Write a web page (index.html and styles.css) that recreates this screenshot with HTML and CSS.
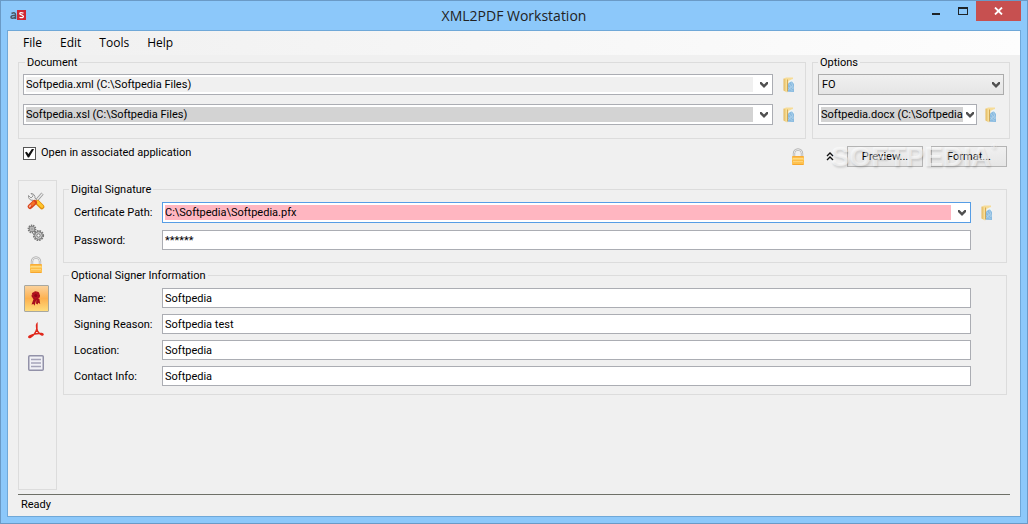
FILE: index.html
```html
<!DOCTYPE html>
<html lang="en">
<head>
<meta charset="utf-8">
<title>XML2PDF Workstation</title>
<link rel="stylesheet" href="styles.css">
</head>
<body>
<svg class="defs" aria-hidden="true">
  <defs>
    <linearGradient id="gold" x1="0" y1="0" x2="0" y2="1">
      <stop offset="0" stop-color="#f7a52c"/><stop offset=".35" stop-color="#ffd56e"/><stop offset=".55" stop-color="#fcb53c"/><stop offset=".8" stop-color="#ffc95a"/><stop offset="1" stop-color="#f59a1c"/>
    </linearGradient>
    <linearGradient id="manila" x1="0" y1="0" x2="1" y2="0">
      <stop offset="0" stop-color="#e3b75a"/><stop offset="1" stop-color="#fbe6a6"/>
    </linearGradient>
  </defs>
  <symbol id="folder" viewBox="0 0 16 16">
    <path d="M3 1.500L5 .5h7V12L7 14H3z" fill="#f6dc98"/>
    <path d="M7.500 4l4-2 1.500 2v9H7.500z" fill="#eef4f6"/>
    <path d="M6.500 8Q8 4.500 11 4.500L13 7v8l-6.500-.2z" fill="#8abbe0"/>
    <path d="M8 7l4 5M7.500 10l4 4M10.500 5.500l2 6M7.500 13l3-4" stroke="#b9d9ee" stroke-width=".7"/>
    <path d="M2.500 1.500L6 2.500v13l-3.500-2z" fill="url(#manila)"/>
    <path d="M6 2.500h.8v11l-.8 2z" fill="#cf9d45"/>
  </symbol>
  <symbol id="lock" viewBox="0 0 16 18">
    <path d="M4 9V5.500a4 4 0 0 1 8 0V9" fill="none" stroke="#b2b2b2" stroke-width="2.400"/>
    <path d="M4 9V5.500a4 4 0 0 1 8 0V9" fill="none" stroke="#e8e8e8" stroke-width="1"/>
    <rect x="2" y="8" width="12" height="9" rx="1" fill="url(#gold)"/>
    <path d="M3 10.500h10M3 13.500h10" stroke="#ffe092" stroke-width=".7"/>
  </symbol>
  <symbol id="chevron" viewBox="0 0 8 7">
    <path d="M0 1v2l4 4 4-4V1H6.500L4 3.500 1.500 1z" fill="#505050"/>
  </symbol>
</svg>
<div class="window">
  <header class="titlebar">
    <svg class="logo" viewBox="0 0 17 12" role="img" aria-label="as">
      <rect x="7" y="0" width="9" height="10" fill="#cf2733"/>
      <path d="M1.500 3.500Q5.500 1.500 5.500 5V9M5.500 5.300Q1 5.300 1 7.200T5.500 7.500" fill="none" stroke="#4a5663" stroke-width="1.500"/>
      <path d="M13.500 3.200Q9.800 2 9.800 3.700C9.800 5.200 13.400 4.600 13.400 6.500Q13.400 8.200 9.500 7.300" fill="none" stroke="#fff" stroke-width="1.300"/>
    </svg>
    <h1 class="title">XML2PDF Workstation</h1>
    <div class="caption-buttons">
      <button class="caption" aria-label="Minimize"><svg width="9" height="10" viewBox="0 0 9 10"><path d="M1 7h8v2H1z" fill="#1e2428"/></svg></button>
      <button class="caption" aria-label="Maximize"><svg width="10" height="10" viewBox="0 0 10 10"><path d="M0 1h10v8H0zM1 3v5h8V3z" fill="#1e2428" fill-rule="evenodd"/></svg></button>
      <button class="caption close" aria-label="Close"><svg width="9" height="8" viewBox="0 0 9 8"><path d="M1 .5l7 7M8 .5l-7 7" stroke="#fff" stroke-width="1.800"/></svg></button>
    </div>
  </header>
  <main class="client">
    <nav class="menu" aria-label="Main">
      <button>File</button><button>Edit</button><button>Tools</button><button>Help</button>
    </nav>
    <div class="top">
      <fieldset class="group files">
        <legend>Document</legend>
        <div class="file-row">
          <div class="combo light"><input type="text" aria-label="XML file" value="Softpedia.xml (C:\Softpedia Files)"><button aria-label="Show XML files"><svg class="chev"><use href="#chevron"/></svg></button></div>
          <button class="browse" aria-label="Browse XML"><svg class="icon"><use href="#folder"/></svg></button>
        </div>
        <div class="file-row">
          <div class="combo grey"><input type="text" aria-label="XSL file" value="Softpedia.xsl (C:\Softpedia Files)"><button aria-label="Show XSL files"><svg class="chev"><use href="#chevron"/></svg></button></div>
          <button class="browse" aria-label="Browse XSL"><svg class="icon"><use href="#folder"/></svg></button>
        </div>
      </fieldset>
      <fieldset class="group options">
        <legend>Options</legend>
        <div class="select-wrap"><select aria-label="Output mode"><option>FO</option></select><svg class="chev"><use href="#chevron"/></svg></div>
        <div class="file-row">
          <div class="combo grey"><input type="text" aria-label="Output file" value="Softpedia.docx (C:\Softpedia"><button aria-label="Show output files"><svg class="chev"><use href="#chevron"/></svg></button></div>
          <button class="browse" aria-label="Browse output"><svg class="icon"><use href="#folder"/></svg></button>
        </div>
      </fieldset>
    </div>
    <div class="actions">
      <label class="check"><input type="checkbox" checked>Open in associated application</label>
      <div class="run">
        <svg class="lock"><use href="#lock"/></svg>
        <button class="collapse" aria-label="Collapse"><svg width="8" height="9" viewBox="0 0 8 9"><path d="M1 4l3-3 3 3M1 8l3-3 3 3" fill="none" stroke="#111" stroke-width="1.400"/></svg></button>
        <button class="push">Preview...</button>
        <button class="push">Format...</button>
        <span class="watermark" aria-hidden="true">SOFTPEDIA<sup>®</sup></span>
      </div>
    </div>
    <div class="work">
      <div class="side" role="toolbar" aria-label="Sections">
        <button aria-label="General"><svg width="18" height="18" viewBox="0 0 18 18">
          <path d="M15.500 1.500L9 9" stroke="#999" stroke-width="3"/><path d="M15.500 1.500L9 9" stroke="#eee" stroke-width="1.200"/>
          <path d="M1.500 3.500L4 6 6.200 3.800 4 1.400A4 4 0 0 1 8 6L10.500 9 8.500 11 6 8.300A4 4 0 0 1 1.500 3.500z" fill="#eee" stroke="#8d8d8d" stroke-width=".9"/>
          <path d="M10.500 10.500l4.300 4.300" stroke="#e08e10" stroke-width="5" stroke-linecap="round"/><path d="M10.500 10l4.500 4.500" stroke="#ffc62b" stroke-width="2.800" stroke-linecap="round"/>
          <path d="M7.500 10.500L3.200 14.500" stroke="#d8441c" stroke-width="5" stroke-linecap="round"/><path d="M7.500 10l-3 3" stroke="#f67428" stroke-width="2.500"/><path d="M3.500 13.500l-.8 1" stroke="#f9b195" stroke-width="1.700" stroke-linecap="round"/>
        </svg></button>
        <button aria-label="Processing"><svg width="18" height="18" viewBox="0 0 18 18">
          <g fill="#d0d0d0" stroke="#777"><circle cx="5" cy="5" r="3.600" stroke-width="1.600" stroke-dasharray="1.300 .9"/><circle cx="5" cy="5" r="2.800" stroke-width=".9"/><circle cx="5" cy="5" r="1.100" fill="#f4f4f4" stroke-width=".8"/>
          <circle cx="11.500" cy="11.500" r="4.700" stroke-width="1.800" stroke-dasharray="1.600 .9"/><circle cx="11.500" cy="11.500" r="3.800" stroke-width=".9"/><circle cx="11.500" cy="11.500" r="1.700" fill="#f4f4f4"/></g>
        </svg></button>
        <button aria-label="Security"><svg class="lock"><use href="#lock"/></svg></button>
        <button class="current" aria-label="Digital signature" aria-pressed="true"><svg width="18" height="18" viewBox="0 0 18 18">
          <path d="M7 8l-2.500 6.500 2-.5 1 1.800L9.500 9zM9.500 8l-.5 5.500 1.500 1 .8-1.700 1.900 1.200-.8-5z" fill="#a80f1d"/>
          <circle cx="8.800" cy="5.500" r="3.500" fill="#b5121f" stroke="#a80f1d" stroke-width="1.500" stroke-dasharray="2.400 .5"/><circle cx="8.800" cy="5.500" r="1.600" fill="#8c0914"/>
        </svg></button>
        <button aria-label="PDF"><svg width="18" height="18" viewBox="0 0 18 18">
          <path d="M9.900 2C9 3 9.800 5.500 9.800 6.800 9.300 9.500 6.500 14 3.500 15.300c-1.700.8-2.500-.6-.7-1.500C5.500 12.500 11 11 14.500 11.600c2 .3 2 1.500.4 1.300C13 12.500 10 9.800 9.900 6.800z" fill="none" stroke="#e0281c" stroke-width="1.500"/>
        </svg></button>
        <button aria-label="Log"><svg width="16" height="16" viewBox="0 0 16 16">
          <rect x=".75" y=".75" width="14.500" height="14.500" rx="1" fill="#f1f1f6" stroke="#9291a8" stroke-width="1.500"/><path d="M3 4.500h10M3 8h10M3 11.500h10" stroke="#a5a4b9" stroke-width="1.400"/>
        </svg></button>
      </div>
      <div class="panels">
        <fieldset class="group signature">
          <legend>Digital Signature</legend>
          <label for="cert">Certificate Path:</label>
          <div class="combo pink"><input id="cert" type="text" value="C:\Softpedia\Softpedia.pfx"><button aria-label="Show certificates"><svg class="chev"><use href="#chevron"/></svg></button></div>
          <button class="browse" aria-label="Browse certificate"><svg class="icon"><use href="#folder"/></svg></button>
          <label for="password">Password:</label>
          <input class="text" id="password" type="text" autocomplete="off" value="******">
        </fieldset>
        <fieldset class="group signer">
          <legend>Optional Signer Information</legend>
          <label for="name">Name:</label><input class="text" id="name" type="text" value="Softpedia">
          <label for="reason">Signing Reason:</label><input class="text" id="reason" type="text" value="Softpedia test">
          <label for="location">Location:</label><input class="text" id="location" type="text" value="Softpedia">
          <label for="contact">Contact Info:</label><input class="text" id="contact" type="text" value="Softpedia">
        </fieldset>
      </div>
    </div>
    <footer class="status">Ready</footer>
  </main>
</div>
</body>
</html>
```
FILE: styles.css
```css
* { box-sizing: border-box; }
body { margin: 0; font: 11px/14px Roboto, "Liberation Sans", sans-serif; color: #000; }
button, input, select { font: inherit; color: inherit; margin: 0; padding: 0; }
button { border: 0; background: none; display: flex; align-items: center; justify-content: center; }
svg { display: block; flex: none; }
.defs { position: absolute; width: 0; height: 0; }

.window { min-height: 100vh; display: flex; flex-direction: column; padding: 0 6px 6px; border: 1px solid #6a9ac6; background: #8cc8fa; }
.titlebar { display: grid; grid-template-columns: 1fr auto 1fr; height: 29px; }
.logo { width: 17px; height: 12px; margin: 9px 0 0 3px; }
.title { margin: 0; font: 14px/29px "Open Sans", "Noto Sans", sans-serif; color: #222; }
.caption-buttons { display: flex; justify-content: flex-end; height: 20px; }
.caption { width: 27px; height: 20px; }
.caption.close { width: 45px; background: #c75050; }

.client { flex: 1; display: flex; flex-direction: column; border: 1px solid #6fa8d8; background: #f0f0f0; }
.menu { display: flex; height: 24px; padding-left: 6px; background: linear-gradient(90deg, #f0f0f0, #fdfdfd); }
.menu button { padding: 0 9px; font: 12px/16px "Open Sans", "Noto Sans", sans-serif; }

.group { min-width: 0; margin: 0; border: 1px solid #dcdcdc; }
.group legend { height: 14px; margin-left: 2px; padding: 0 2px; line-height: 16px; }
.top { display: grid; grid-template-columns: 1fr 198px; gap: 6px; padding: 0 10px; }
.files { padding: 5px 8px 13px 4px; }
.options { padding: 5px 5px 13px; }
.options legend { margin-left: 0; }
.file-row { display: flex; align-items: center; gap: 8px; }
.file-row + .file-row, .select-wrap + .file-row { margin-top: 9px; }
.options .file-row { gap: 6px; padding-right: 5px; }

.combo { flex: 1; min-width: 0; height: 21px; display: flex; align-items: center; padding-left: 2px; border: 1px solid #abadb3; background: #fff; }
.combo input { flex: 1; min-width: 0; height: 15px; border: 0; outline: 0; background: #f0f0f0; }
.combo button { width: 19px; height: 19px; padding-left: 2px; }
.options .combo button { width: 13px; padding: 0; }
.combo.grey input { background: #d3d3d3; }
.combo.pink { border-color: #569de5; }
.combo.pink input { background: #ffb6c1; }
.chev { width: 8px; height: 7px; }
.icon { width: 16px; height: 16px; }
.lock { width: 16px; height: 18px; }
.browse { width: 16px; height: 16px; }

.select-wrap { display: grid; align-items: center; }
.select-wrap > * { grid-area: 1 / 1; }
.select-wrap .chev { justify-self: end; margin-right: 4px; pointer-events: none; }
select { appearance: none; width: 100%; height: 21px; padding: 0 20px 0 3px; border: 1px solid #acacac; border-radius: 0; background: linear-gradient(#f0f0f0, #e5e5e5); }

.actions { display: flex; justify-content: space-between; align-items: flex-start; padding: 7px 13px 13px 15px; }
.check { display: flex; align-items: center; gap: 5px; }
.check input { appearance: none; width: 13px; height: 13px; border: 1px solid #555; background: #fff; display: grid; place-items: center; }
.check input:checked::before { content: ""; width: 9px; height: 9px; background: #111; clip-path: polygon(0 45%, 20% 35%, 38% 62%, 80% 0, 100% 8%, 45% 100%, 32% 100%); }
.run { position: relative; display: flex; align-items: center; gap: 8px; }
.collapse { width: 8px; height: 12px; margin: 0 5px 0 12px; }
.push { width: 76px; height: 21px; border: 1px solid #b4b4b4; background: linear-gradient(#f0f0f0, #e6e6e6); }
.watermark { position: absolute; right: 10px; top: -3px; font: bold 28px/28px "Liberation Sans", sans-serif; color: rgba(255, 255, 255, .5); text-shadow: 1px 2px 2px rgba(0, 0, 0, .12); pointer-events: none; white-space: nowrap; }
.watermark sup { font-size: 8px; line-height: 8px; vertical-align: top; }

.work { flex: 1; display: flex; gap: 6px; padding: 0 13px 0 10px; }
.side { width: 39px; display: flex; flex-direction: column; align-items: center; gap: 5px; padding: 8px 2px 0 0; border: 1px solid #dcdcdc; }
.side button { width: 25px; height: 27px; padding: 0 1px 3px 0; }
.side .current { padding-bottom: 0; border: 1px solid #a8a8a0; border-radius: 1px; background: linear-gradient(#fbd29c, #fdb14f 50%, #ffdc7c); }
.side .current ~ button { padding-bottom: 0; }
.panels { flex: 1; min-width: 0; display: flex; flex-direction: column; gap: 5px; padding-top: 2px; }
.panels .group { display: grid; grid-template-columns: 88px 1fr 24px; align-items: center; }
.panels .group legend { margin-left: -5px; }
.panels label { grid-column: 1; padding-top: 1px; }
.signature { padding: 6px 11px 12px 10px; row-gap: 7px; }
.signature .browse { justify-self: end; }
.signer { padding: 6px 11px 8px 10px; row-gap: 6px; }
.text { grid-column: 2; width: 100%; height: 20px; padding: 0 2px; border: 1px solid #abadb3; border-radius: 0; background: #fff; }
.status { margin: 4px 10px 0; padding: 3px 3px 4px; border-top: 1px solid #6e7068; }
```
